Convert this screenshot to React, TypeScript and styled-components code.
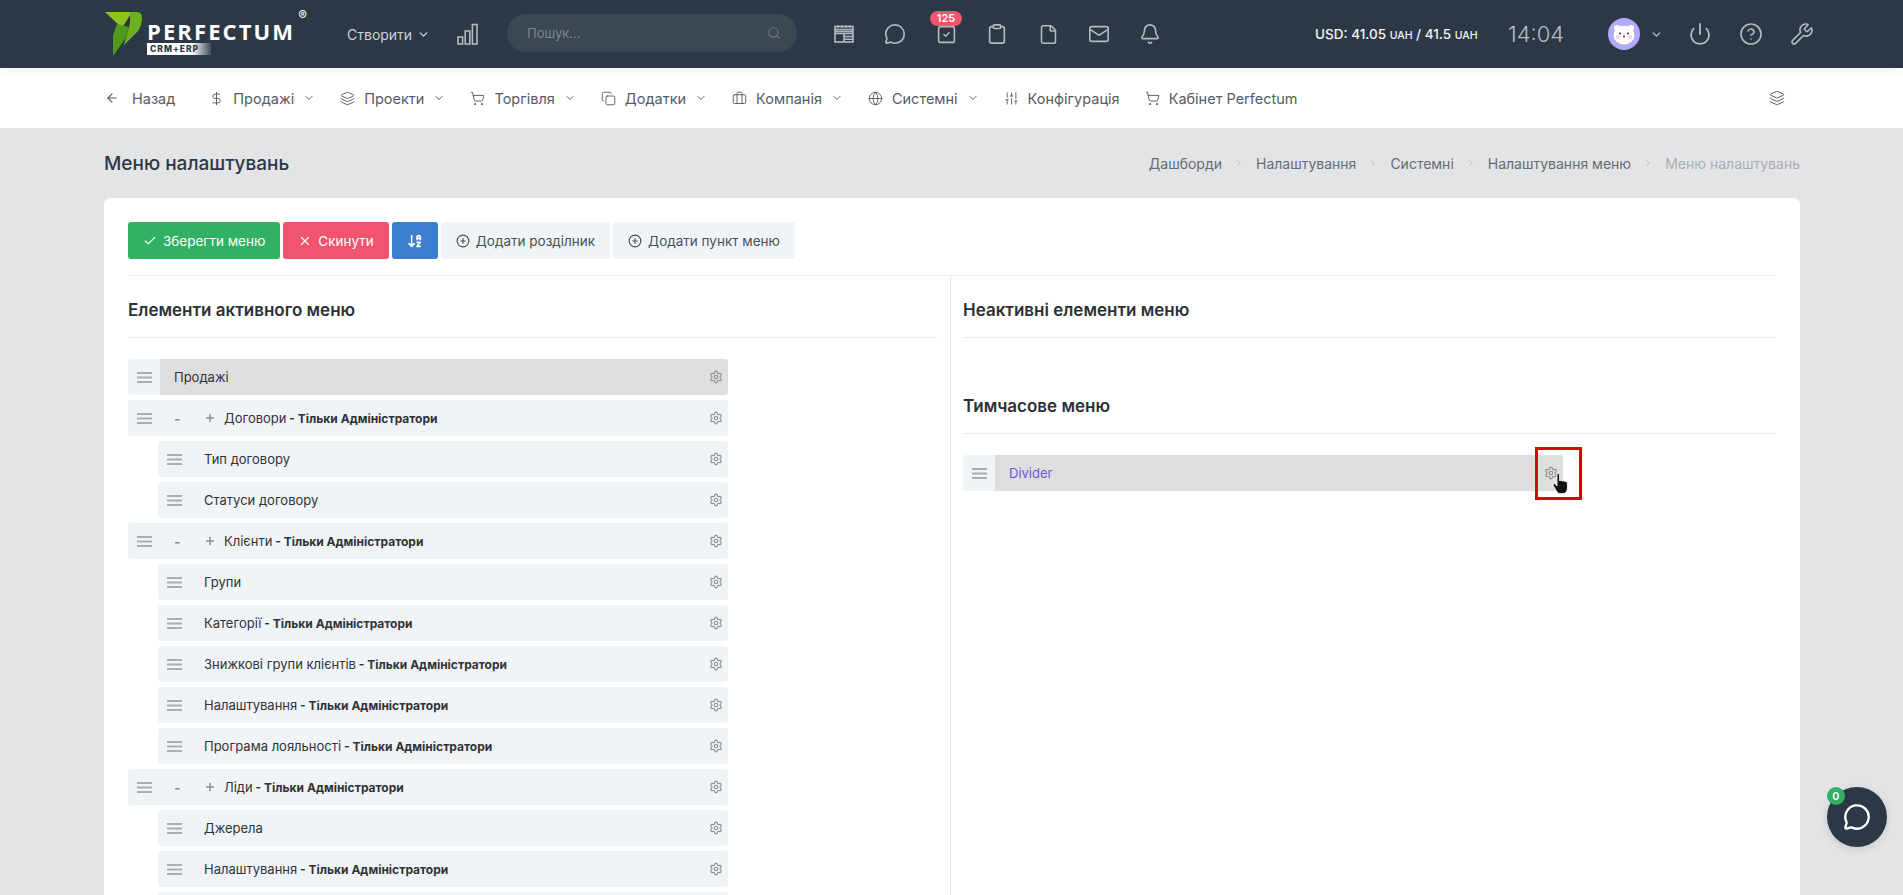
import React from 'react';
import styled, { createGlobalStyle } from 'styled-components';
import {
  ArrowLeft,
  Bell,
  Briefcase,
  Check,
  ChevronDown,
  ChevronRight,
  CircleHelp,
  CirclePlus,
  Clipboard,
  Copy,
  DollarSign,
  File,
  Globe,
  Layers,
  Mail,
  MessageCircle,
  Plus,
  Power,
  Search,
  Settings,
  ShoppingCart,
  SlidersVertical,
  SquareCheck,
  Wrench,
  X,
  ArrowDownAZ,
} from 'lucide-react';

const GlobalStyle = createGlobalStyle`
  html, body {
    margin: 0;
    height: 100%;
    overflow: hidden;
    background: #e3e4e6;
    font-family: Inter, "Noto Sans", sans-serif;
    color: #2d3748;
  }
  * { box-sizing: border-box; }
`;

type RowData = {
  kind: 'top' | 'group' | 'child';
  label: string;
  admin?: boolean;
};

const rows: RowData[] = [
  { kind: 'top', label: 'Продажі' },
  { kind: 'group', label: 'Договори', admin: true },
  { kind: 'child', label: 'Тип договору' },
  { kind: 'child', label: 'Статуси договору' },
  { kind: 'group', label: 'Клієнти', admin: true },
  { kind: 'child', label: 'Групи' },
  { kind: 'child', label: 'Категорії', admin: true },
  { kind: 'child', label: 'Знижкові групи клієнтів', admin: true },
  { kind: 'child', label: 'Налаштування', admin: true },
  { kind: 'child', label: 'Програма лояльності', admin: true },
  { kind: 'group', label: 'Ліди', admin: true },
  { kind: 'child', label: 'Джерела' },
  { kind: 'child', label: 'Налаштування', admin: true },
  { kind: 'child', label: 'Статуси' },
];

const navItems = [
  { label: 'Продажі', icon: DollarSign, caret: true },
  { label: 'Проекти', icon: Layers, caret: true },
  { label: 'Торгівля', icon: ShoppingCart, caret: true },
  { label: 'Додатки', icon: Copy, caret: true },
  { label: 'Компанія', icon: Briefcase, caret: true },
  { label: 'Системні', icon: Globe, caret: true },
  { label: 'Конфігурація', icon: SlidersVertical, caret: false },
  { label: 'Кабінет Perfectum', icon: ShoppingCart, caret: false },
];

const crumbs = ['Дашборди', 'Налаштування', 'Системні', 'Налаштування меню'];

const Logo = () => (
  <LogoWrap>
    <svg width="40" height="46" viewBox="0 0 40 46">
      <polygon points="0,1 27,1 17,17" fill="#8fc31f" />
      <path d="M25 1 H32 Q37 1 37 7 Q37 14 33 20 L19 34 L25 12 Z" fill="#6cb21e" />
      <polygon points="12,13 24,16 20,28 8,45 8,24" fill="#4f9a1b" />
    </svg>
    <LogoText>
      <LogoName>PERFECTUM</LogoName>
      <LogoTag>CRM+ERP</LogoTag>
      <LogoReg>®</LogoReg>
    </LogoText>
  </LogoWrap>
);

const BarsIcon = () => (
  <svg width="21" height="22" viewBox="0 0 21 22" fill="none" stroke="#b4bac1" strokeWidth="1.6">
    <rect x="1" y="14" width="4.6" height="7" />
    <rect x="8.2" y="8" width="4.6" height="13" />
    <rect x="15.4" y="1.5" width="4.6" height="19.5" />
  </svg>
);

const TableIcon = () => (
  <svg width="20" height="20" viewBox="0 0 20 20" fill="none" stroke="#b4bac1" strokeWidth="1.6">
    <rect x="1" y="2.5" width="18" height="15.5" />
    <path d="M1 5.5 H19 M1 7.5 H19 M1 9.5 H19 M10 9.5 V18 M10 12.5 H19 M10 15.2 H19" />
    <path d="M4 1 V4 M8 1 V4 M12 1 V4 M16 1 V4" strokeWidth="1.2" />
  </svg>
);

const HandleIcon = () => (
  <svg width="15" height="11" viewBox="0 0 15 11" fill="#a9aeb4">
    <rect width="15" height="2" />
    <rect y="4.5" width="15" height="2" />
    <rect y="9" width="15" height="2" />
  </svg>
);

const BearAvatar = () => (
  <svg width="32" height="32" viewBox="0 0 32 32">
    <circle cx="16" cy="16" r="16" fill="#b2aaf6" />
    <circle cx="9" cy="10" r="3" fill="#fff" />
    <circle cx="23" cy="10" r="3" fill="#fff" />
    <ellipse cx="16" cy="17" rx="10.5" ry="9.5" fill="#fffdf8" />
    <circle cx="12" cy="15.5" r="1" fill="#333" />
    <circle cx="20" cy="15.5" r="1" fill="#333" />
    <circle cx="16" cy="18.5" r="1" fill="#333" />
    <circle cx="9.5" cy="19" r="1.8" fill="#f8cdd4" />
    <circle cx="22.5" cy="19" r="1.8" fill="#f8cdd4" />
  </svg>
);

const HandCursor = () => (
  <svg width="17" height="22" viewBox="0 0 17 22">
    <path
      d="M5 1.6 C5 .4 7.6 .4 7.6 1.6 V8 C8 7 10 7 10.3 8.3 C10.8 7.4 12.7 7.6 13 8.9 C13.5 8.2 15.4 8.5 15.4 10 V15 C15.4 18 13.8 20.6 11 20.6 H8.5 C6.5 20.6 5.4 19.6 4.4 18 L1.2 12.6 C.5 11.2 2.4 10 3.5 11.2 L5 13 Z"
      fill="#111"
      stroke="#fff"
      strokeWidth=".8"
    />
  </svg>
);

const MenuRowItem = ({ row }: { row: RowData }) => (
  <Row $kind={row.kind}>
    <Handle>
      <HandleIcon />
    </Handle>
    <RowBody $kind={row.kind}>
      {row.kind === 'group' && (
        <>
          <Minus>-</Minus>
          <PlusMark>
            <Plus size={12} strokeWidth={3} />
          </PlusMark>
        </>
      )}
      <RowLabel>
        {row.label}
        {row.admin && <AdminNote> - Тільки Адміністратори</AdminNote>}
      </RowLabel>
      <Settings size={14} color="#8c9196" />
    </RowBody>
  </Row>
);

const App = () => (
  <>
    <GlobalStyle />
    <Header>
      <Logo />
      <CreateMenu>
        Створити <ChevronDown size={13} strokeWidth={2.4} />
      </CreateMenu>
      <BarsSlot>
        <BarsIcon />
      </BarsSlot>
      <SearchBox>
        <SearchText>Пошук...</SearchText>
        <Search size={14} color="#6f7882" />
      </SearchBox>
      <HeaderIcons>
        <TopIcon>
          <TableIcon />
        </TopIcon>
        <TopIcon>
          <MessageCircle size={22} strokeWidth={1.8} />
        </TopIcon>
        <TopIcon>
          <SquareCheck size={21} strokeWidth={1.8} />
          <Badge>125</Badge>
        </TopIcon>
        <TopIcon>
          <Clipboard size={22} strokeWidth={1.8} />
        </TopIcon>
        <TopIcon>
          <File size={21} strokeWidth={1.8} />
        </TopIcon>
        <TopIcon>
          <Mail size={22} strokeWidth={1.8} />
        </TopIcon>
        <TopIcon>
          <Bell size={22} strokeWidth={1.8} />
        </TopIcon>
      </HeaderIcons>
      <Rate>
        USD: 41.05 <small>UAH</small> / 41.5 <small>UAH</small>
      </Rate>
      <Clock>14:04</Clock>
      <BearAvatar />
      <AvatarCaret>
        <ChevronDown size={13} strokeWidth={2.4} />
      </AvatarCaret>
      <RightIcons>
        <Power size={24} strokeWidth={1.8} />
        <CircleHelp size={24} strokeWidth={1.6} />
        <Wrench size={24} strokeWidth={1.6} />
      </RightIcons>
    </Header>

    <SubNav>
      <NavItem>
        <ArrowLeft size={14} />
        <NavBack>Назад</NavBack>
      </NavItem>
      {navItems.map(({ label, icon: Icon, caret }) => (
        <NavItem key={label}>
          <Icon size={15} strokeWidth={1.5} />
          <span>{label}</span>
          {caret && <ChevronDown size={12} />}
        </NavItem>
      ))}
      <NavEnd>
        <Layers size={16} strokeWidth={1.5} />
      </NavEnd>
    </SubNav>

    <Content>
      <PageHead>
        <PageTitle>Меню налаштувань</PageTitle>
        <Crumbs>
          {crumbs.map(c => (
            <React.Fragment key={c}>
              <span>{c}</span>
              <ChevronRight size={10} color="#b5b9be" />
            </React.Fragment>
          ))}
          <LastCrumb>Меню налаштувань</LastCrumb>
        </Crumbs>
      </PageHead>

      <Card>
        <Toolbar>
          <ActionButton $variant="green">
            <Check size={14} /> Зберегти меню
          </ActionButton>
          <ActionButton $variant="red">
            <X size={14} /> Скинути
          </ActionButton>
          <ActionButton $variant="blue">
            <ArrowDownAZ size={16} strokeWidth={2.4} />
          </ActionButton>
          <ActionButton $variant="light">
            <CirclePlus size={14} /> Додати розділник
          </ActionButton>
          <ActionButton $variant="light">
            <CirclePlus size={14} /> Додати пункт меню
          </ActionButton>
        </Toolbar>

        <Columns>
          <LeftColumn>
            <SectionTitle>Елементи активного меню</SectionTitle>
            <RowList>
              {rows.map((row, i) => (
                <MenuRowItem key={i} row={row} />
              ))}
            </RowList>
          </LeftColumn>
          <RightColumn>
            <SectionTitle>Неактивні елементи меню</SectionTitle>
            <InactiveList />
            <SectionTitle>Тимчасове меню</SectionTitle>
            <RowList>
              <Row $kind="top">
                <Handle>
                  <HandleIcon />
                </Handle>
                <RowBody $kind="top">
                  <DividerLabel>Divider</DividerLabel>
                  <Settings size={14} color="#8c9196" />
                </RowBody>
                <Highlight />
                <CursorMark>
                  <HandCursor />
                </CursorMark>
              </Row>
            </RowList>
          </RightColumn>
        </Columns>
      </Card>
    </Content>

    <ChatBubble>
      <MessageCircle size={28} strokeWidth={2} color="#fff" />
      <ChatCount>0</ChatCount>
    </ChatBubble>
  </>
);

const Header = styled.header`
  position: relative;
  z-index: 2;
  height: 68px;
  display: flex;
  align-items: center;
  padding-left: 105px;
  background: #2c3845;
  box-shadow: 0 2px 10px rgba(0, 0, 0, 0.05);
`;

const LogoWrap = styled.div`
  width: 242px;
  display: flex;
  align-items: center;
  gap: 2px;
`;

const LogoText = styled.div`
  position: relative;
  margin-top: 6px;
`;

const LogoName = styled.div`
  font-family: 'Open Sans', sans-serif;
  font-size: 22px;
  line-height: 24px;
  font-weight: 700;
  letter-spacing: 2.1px;
  color: #fff;
`;

const LogoTag = styled.div`
  width: 64px;
  height: 12px;
  padding-left: 3px;
  font-size: 8.5px;
  line-height: 12px;
  font-weight: 800;
  letter-spacing: 1px;
  color: #2c3845;
  background: linear-gradient(90deg, #fff 70%, rgba(255, 255, 255, 0.1));
`;

const LogoReg = styled.span`
  position: absolute;
  top: -12px;
  right: -12px;
  font-size: 13px;
  color: #fff;
`;

const CreateMenu = styled.div`
  width: 90px;
  display: flex;
  align-items: center;
  gap: 5px;
  font-size: 14px;
  color: #ced3d8;
`;

const BarsSlot = styled.div`
  display: flex;
  margin-left: 20px;
  margin-right: 29px;
`;

const SearchBox = styled.div`
  width: 290px;
  height: 38px;
  margin-top: -2px;
  padding: 0 16px 0 20px;
  display: flex;
  align-items: center;
  justify-content: space-between;
  border-radius: 19px;
  background: #3c4753;
`;

const SearchText = styled.span`
  font-size: 13px;
  color: #7b8590;
`;

const HeaderIcons = styled.div`
  display: flex;
  align-items: center;
  gap: 27px;
  margin-left: 35px;
  color: #b4bac1;
`;

const TopIcon = styled.div`
  position: relative;
  width: 24px;
  height: 24px;
  display: flex;
  align-items: center;
  justify-content: center;
`;

const Badge = styled.span`
  position: absolute;
  top: -11px;
  left: -4px;
  width: 32px;
  height: 15px;
  border-radius: 8px;
  background: #f25470;
  color: #fff;
  font-size: 11px;
  line-height: 15px;
  font-weight: 600;
  text-align: center;
`;

const Rate = styled.div`
  margin-left: 153px;
  width: 193px;
  font-size: 13.5px;
  font-weight: 500;
  color: #f3f4f6;

  small {
    font-size: 10.5px;
  }
`;

const Clock = styled.div`
  width: 100px;
  font-size: 22px;
  font-weight: 300;
  color: #b9bec4;
`;

const AvatarCaret = styled.div`
  display: flex;
  margin-left: 10px;
  color: #b4bac1;
`;

const RightIcons = styled.div`
  display: flex;
  align-items: center;
  gap: 27px;
  margin-left: 25px;
  color: #b4bac1;
`;

const SubNav = styled.nav`
  height: 60px;
  display: flex;
  align-items: center;
  gap: 25px;
  padding: 0 118px 0 105px;
  background: #fff;
  font-size: 14.5px;
  color: #555d66;
`;

const NavItem = styled.div`
  display: flex;
  align-items: center;
  gap: 9px;
`;

const NavBack = styled.span`
  margin-left: 4px;
  margin-right: 9px;
`;

const NavEnd = styled.div`
  display: flex;
  margin-left: auto;
`;

const Content = styled.main`
  padding: 0 103px 0 104px;
`;

const PageHead = styled.div`
  height: 70px;
  display: flex;
  align-items: center;
  justify-content: space-between;
`;

const PageTitle = styled.h1`
  margin: 0;
  font-size: 19px;
  font-weight: 500;
  color: #2d3748;
`;

const Crumbs = styled.div`
  display: flex;
  align-items: center;
  gap: 12px;
  font-size: 14px;
  color: #656c74;
`;

const LastCrumb = styled.span`
  color: #a9aeb4;
`;

const Card = styled.section`
  padding: 24px;
  border-radius: 6px 6px 0 0;
  background: #fff;
`;

const Toolbar = styled.div`
  display: flex;
  gap: 3px;
  padding-bottom: 16px;
  border-bottom: 1px solid #eceef1;
`;

const buttonColors = {
  green: { bg: '#31b163', fg: '#fff' },
  red: { bg: '#f25470', fg: '#fff' },
  blue: { bg: '#3d7fcf', fg: '#fff' },
  light: { bg: '#f1f4f7', fg: '#4a5058' },
};

const ActionButton = styled.button<{ $variant: keyof typeof buttonColors }>`
  height: 37px;
  padding: 0 15px;
  display: flex;
  align-items: center;
  gap: 6px;
  border: 0;
  border-radius: 3px;
  font-family: inherit;
  font-size: 13.5px;
  color: ${p => buttonColors[p.$variant].fg};
  background: ${p => buttonColors[p.$variant].bg};
`;

const Columns = styled.div`
  display: grid;
  grid-template-columns: 823px 1fr;
`;

const LeftColumn = styled.div`
  padding-right: 13px;
  border-right: 1px solid #e4e6e9;
`;

const RightColumn = styled.div`
  padding-left: 12px;
`;

const SectionTitle = styled.h2`
  margin: 0;
  padding: 22px 0 15px;
  font-size: 17px;
  line-height: 24px;
  font-weight: 600;
  color: #2d3135;
  border-bottom: 1px solid #eceef1;
`;

const RowList = styled.div`
  display: flex;
  flex-direction: column;
  gap: 5px;
  padding-top: 21px;
`;

const InactiveList = styled.div`
  height: 34px;
`;

const Row = styled.div<{ $kind: RowData['kind'] }>`
  position: relative;
  width: ${p => (p.$kind === 'child' ? 570 : 600)}px;
  height: 36px;
  margin-left: ${p => (p.$kind === 'child' ? 30 : 0)}px;
  display: flex;
  border-radius: 3px;
  background: #f1f4f7;
`;

const Handle = styled.div`
  width: 32px;
  display: flex;
  align-items: center;
  justify-content: center;
`;

const RowBody = styled.div<{ $kind: RowData['kind'] }>`
  flex: 1;
  display: flex;
  align-items: center;
  padding: 0 5px 0 ${p => (p.$kind === 'group' ? 14 : 14)}px;
  border-radius: 0 3px 3px 0;
  background: ${p => (p.$kind === 'top' ? '#dedede' : 'transparent')};
  font-size: 13px;
`;

const Minus = styled.span`
  width: 20px;
  margin-right: 10px;
  font-size: 14px;
  font-weight: 600;
  color: #8a8f95;
`;

const PlusMark = styled.span`
  display: flex;
  width: 20px;
  margin-right: 0;
  color: #8a8f95;
`;

const RowLabel = styled.span`
  flex: 1;
  color: #2f3338;
`;

const AdminNote = styled.strong`
  font-size: 12px;
  font-weight: 700;
`;

const DividerLabel = styled.span`
  flex: 1;
  color: #6a5acd;
`;

const Highlight = styled.div`
  position: absolute;
  top: -8px;
  right: -19px;
  width: 47px;
  height: 53px;
  border: 3px solid #e00000;
`;

const CursorMark = styled.div`
  position: absolute;
  top: 18px;
  right: -6px;
  display: flex;
`;

const ChatBubble = styled.div`
  position: fixed;
  top: 787px;
  left: 1827px;
  width: 60px;
  height: 60px;
  display: flex;
  align-items: center;
  justify-content: center;
  border-radius: 50%;
  background: #2c3845;
  box-shadow: 0 2px 8px rgba(0, 0, 0, 0.12);
`;

const ChatCount = styled.span`
  position: absolute;
  top: 0;
  left: 0;
  width: 18px;
  height: 18px;
  border-radius: 50%;
  background: #31b163;
  color: #fff;
  font-size: 11px;
  line-height: 18px;
  font-weight: 600;
  text-align: center;
`;

export default App;
